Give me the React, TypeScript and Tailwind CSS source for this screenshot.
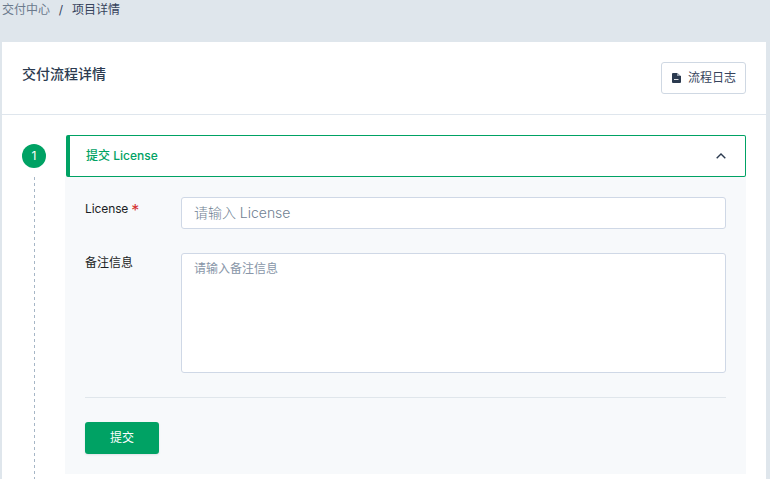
import React from "react";

function Breadcrumb() {
  return (
    <nav className="flex h-[42px] items-start pl-0.5 text-xs leading-5 whitespace-pre">
      <span className="text-[#6b7a8c]">交付中心</span>
      <span className="w-[22px] text-center text-[#36435c]">/</span>
      <span className="text-[#36435c]">项目详情</span>
    </nav>
  );
}

function LogButton() {
  return (
    <button className="flex h-8 w-[85px] items-center rounded-[3px] border border-[#cfd8e3] bg-white pl-2.5 text-xs text-[#36435c]">
      <svg width="10" height="12" viewBox="0 0 10 12" className="mr-1.5 shrink-0">
        <path d="M0 2Q0 1 1 1H5.5V4H9V10Q9 11 8 11H1Q0 11 0 10Z" fill="#2b3a4f" />
        <path d="M5.5 1L9 4H5.5Z" fill="#8b96a4" />
        <path d="M2 7.5H6.5" stroke="#fff" strokeWidth="1" strokeOpacity="0.85" />
      </svg>
      流程日志
    </button>
  );
}

function StepMarker() {
  return (
    <div className="flex w-6 shrink-0 flex-col items-center pt-[9px]">
      <div className="flex h-6 w-6 items-center justify-center rounded-full bg-[#00a264] text-xs text-white">1</div>
      <div className="mt-[9px] w-px flex-1 bg-[repeating-linear-gradient(to_bottom,#a6b6c6_0px,#a6b6c6_3px,transparent_3px,transparent_6px)]" />
    </div>
  );
}

function StepPanel() {
  return (
    <section className="ml-[19px] w-[681px]">
      <div className="ml-px flex h-[42px] items-center justify-between rounded-[2px] border border-l-4 border-[#00a264] bg-white pr-[19px] pl-4">
        <span className="text-xs font-medium text-[#00a264]">提交 License</span>
        <svg width="10" height="6" viewBox="0 0 10 6" fill="none">
          <path d="M.7 5.2L5 1L9.3 5.2" stroke="#2b3a4f" strokeWidth="1.4" />
        </svg>
      </div>
      <form className="h-[297px] bg-[#f7f9fb] px-5 pt-5">
        <div className="flex h-8">
          <label className="flex w-24 pt-0.5 text-xs leading-5 text-[#1b1e24]">
            <span className="tracking-[-0.1px]">License</span>
            <span className="ml-[3px] pt-px text-base leading-5 text-[#d43030]">*</span>
          </label>
          <input
            className="h-8 w-[545px] rounded-[3px] border border-[#cfd8e6] bg-white px-3 pb-0.5 text-sm font-light tracking-[-0.02px] placeholder:text-[#6f7f92]"
            placeholder="请输入 License"
          />
        </div>
        <div className="mt-6 flex h-[120px]">
          <label className="w-24 text-xs leading-5 text-[#1b1e24]">备注信息</label>
          <textarea
            className="h-[120px] w-[545px] resize-none rounded-[3px] border border-[#cfd8e6] bg-white px-3 py-[5px] text-xs leading-5 placeholder:text-[#8896a8]"
            placeholder="请输入备注信息"
          />
        </div>
        <div className="mt-6 border-t border-[#e0e6eb] pt-6">
          <button type="button" className="h-8 w-[74px] rounded-[3px] bg-[#00a264] text-xs text-white shadow-[0_1px_2px_rgba(54,67,92,0.12)]">
            提交
          </button>
        </div>
      </form>
    </section>
  );
}

export default function App() {
  return (
    <div className="flex h-[479px] w-[770px] flex-col overflow-hidden bg-[#dfe6ec] font-[Inter,'Noto_Sans_CJK_SC',sans-serif]">
      <Breadcrumb />
      <main className="mr-1 ml-0.5 flex flex-1 flex-col bg-white">
        <header className="flex h-[73px] shrink-0 items-start justify-between border-b border-[#dfe6ed] px-5 pt-5">
          <h1 className="pt-0.5 text-sm leading-5 font-medium text-[#2b3a4f]">交付流程详情</h1>
          <LogButton />
        </header>
        <div className="flex flex-1 px-5 pt-5">
          <StepMarker />
          <StepPanel />
        </div>
      </main>
    </div>
  );
}
